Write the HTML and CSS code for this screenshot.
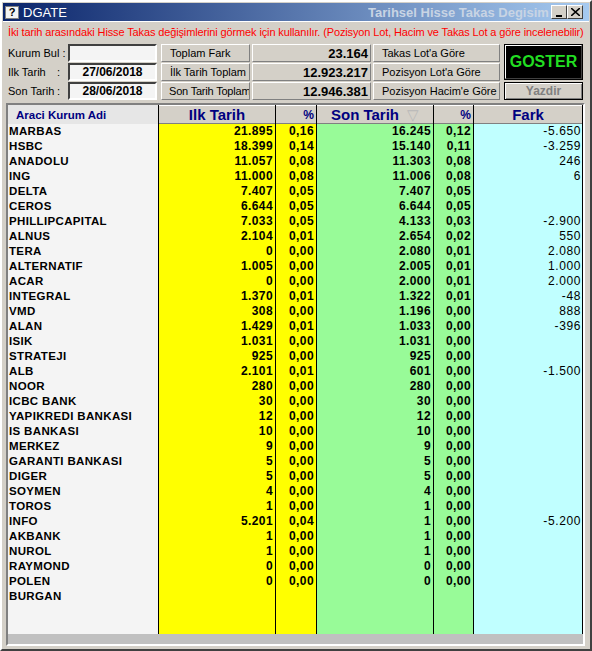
FILE: index.html
```html
<!DOCTYPE html>
<html>
<head>
<meta charset="utf-8">
<link rel="stylesheet" href="styles.css">
</head>
<body>
<div class="window">
  <div class="titlebar">
    <span class="app-icon">?</span>
    <span class="title">DGATE</span>
    <span class="subtitle">Tarihsel Hisse Takas Degisim</span>
    <span class="tb-btn tb-min"><span class="min-bar"></span></span>
    <span class="tb-btn tb-close">
      <svg width="9" height="8" viewBox="0 0 9 8"><path d="M0 0L9 8M9 0L0 8" stroke="#000" stroke-width="1.6"/></svg>
    </span>
  </div>
  <div class="body">
    <div class="hint">İki tarih arasındaki Hisse Takas değişimlerini görmek için kullanılır. (Pozisyon Lot, Hacim ve Takas Lot a göre incelenebilir)</div>
    <div class="form">
      <div class="lbl">Kurum Bul :</div>
      <div class="field"></div>
      <div class="btn">Toplam Fark</div>
      <div class="value">23.164</div>
      <div class="btn">Takas Lot'a Göre</div>
      <div class="goster">GOSTER</div>

      <div class="lbl"><span>Ilk Tarih</span><span>:</span></div>
      <div class="field date">27/06/2018</div>
      <div class="btn">İlk Tarih Toplam</div>
      <div class="value">12.923.217</div>
      <div class="btn">Pozisyon Lot'a Göre</div>

      <div class="lbl"><span>Son Tarih</span><span>:</span></div>
      <div class="field date">28/06/2018</div>
      <div class="btn tight">Son Tarih Toplam</div>
      <div class="value">12.946.381</div>
      <div class="btn">Pozisyon Hacim'e Göre</div>
      <div class="yazdir">Yazdir</div>
    </div>
    <div class="grid">
      <div class="cols">
        <div class="col c-name">
          <div class="hd hd-name">Araci Kurum Adi</div>
          <div class="cell">MARBAS</div><div class="cell">HSBC</div><div class="cell">ANADOLU</div><div class="cell">ING</div><div class="cell">DELTA</div><div class="cell">CEROS</div><div class="cell">PHILLIPCAPITAL</div><div class="cell">ALNUS</div><div class="cell">TERA</div><div class="cell">ALTERNATIF</div><div class="cell">ACAR</div><div class="cell">INTEGRAL</div><div class="cell">VMD</div><div class="cell">ALAN</div><div class="cell">ISIK</div><div class="cell">STRATEJI</div><div class="cell">ALB</div><div class="cell">NOOR</div><div class="cell">ICBC BANK</div><div class="cell">YAPIKREDI BANKASI</div><div class="cell">IS BANKASI</div><div class="cell">MERKEZ</div><div class="cell">GARANTI BANKASI</div><div class="cell">DIGER</div><div class="cell">SOYMEN</div><div class="cell">TOROS</div><div class="cell">INFO</div><div class="cell">AKBANK</div><div class="cell">NUROL</div><div class="cell">RAYMOND</div><div class="cell">POLEN</div><div class="cell">BURGAN</div>
        </div>
        <div class="col c-ilk">
          <div class="hd hd-big">Ilk Tarih</div>
          <div class="cell num">21.895</div><div class="cell num">18.399</div><div class="cell num">11.057</div><div class="cell num">11.000</div><div class="cell num">7.407</div><div class="cell num">6.644</div><div class="cell num">7.033</div><div class="cell num">2.104</div><div class="cell num">0</div><div class="cell num">1.005</div><div class="cell num">0</div><div class="cell num">1.370</div><div class="cell num">308</div><div class="cell num">1.429</div><div class="cell num">1.031</div><div class="cell num">925</div><div class="cell num">2.101</div><div class="cell num">280</div><div class="cell num">30</div><div class="cell num">12</div><div class="cell num">10</div><div class="cell num">9</div><div class="cell num">5</div><div class="cell num">5</div><div class="cell num">4</div><div class="cell num">1</div><div class="cell num">5.201</div><div class="cell num">1</div><div class="cell num">1</div><div class="cell num">0</div><div class="cell num">0</div>
        </div>
        <div class="col c-p1">
          <div class="hd hd-pct">%</div>
          <div class="cell num">0,16</div><div class="cell num">0,14</div><div class="cell num">0,08</div><div class="cell num">0,08</div><div class="cell num">0,05</div><div class="cell num">0,05</div><div class="cell num">0,05</div><div class="cell num">0,01</div><div class="cell num">0,00</div><div class="cell num">0,00</div><div class="cell num">0,00</div><div class="cell num">0,01</div><div class="cell num">0,00</div><div class="cell num">0,01</div><div class="cell num">0,00</div><div class="cell num">0,00</div><div class="cell num">0,01</div><div class="cell num">0,00</div><div class="cell num">0,00</div><div class="cell num">0,00</div><div class="cell num">0,00</div><div class="cell num">0,00</div><div class="cell num">0,00</div><div class="cell num">0,00</div><div class="cell num">0,00</div><div class="cell num">0,00</div><div class="cell num">0,04</div><div class="cell num">0,00</div><div class="cell num">0,00</div><div class="cell num">0,00</div><div class="cell num">0,00</div>
        </div>
        <div class="col c-son">
          <div class="hd hd-big">Son Tarih <span class="sort">▽</span></div>
          <div class="cell num">16.245</div><div class="cell num">15.140</div><div class="cell num">11.303</div><div class="cell num">11.006</div><div class="cell num">7.407</div><div class="cell num">6.644</div><div class="cell num">4.133</div><div class="cell num">2.654</div><div class="cell num">2.080</div><div class="cell num">2.005</div><div class="cell num">2.000</div><div class="cell num">1.322</div><div class="cell num">1.196</div><div class="cell num">1.033</div><div class="cell num">1.031</div><div class="cell num">925</div><div class="cell num">601</div><div class="cell num">280</div><div class="cell num">30</div><div class="cell num">12</div><div class="cell num">10</div><div class="cell num">9</div><div class="cell num">5</div><div class="cell num">5</div><div class="cell num">4</div><div class="cell num">1</div><div class="cell num">1</div><div class="cell num">1</div><div class="cell num">1</div><div class="cell num">0</div><div class="cell num">0</div>
        </div>
        <div class="col c-p2">
          <div class="hd hd-pct">%</div>
          <div class="cell num">0,12</div><div class="cell num">0,11</div><div class="cell num">0,08</div><div class="cell num">0,08</div><div class="cell num">0,05</div><div class="cell num">0,05</div><div class="cell num">0,03</div><div class="cell num">0,02</div><div class="cell num">0,01</div><div class="cell num">0,01</div><div class="cell num">0,01</div><div class="cell num">0,01</div><div class="cell num">0,00</div><div class="cell num">0,00</div><div class="cell num">0,00</div><div class="cell num">0,00</div><div class="cell num">0,00</div><div class="cell num">0,00</div><div class="cell num">0,00</div><div class="cell num">0,00</div><div class="cell num">0,00</div><div class="cell num">0,00</div><div class="cell num">0,00</div><div class="cell num">0,00</div><div class="cell num">0,00</div><div class="cell num">0,00</div><div class="cell num">0,00</div><div class="cell num">0,00</div><div class="cell num">0,00</div><div class="cell num">0,00</div><div class="cell num">0,00</div>
        </div>
        <div class="col c-fark">
          <div class="hd hd-big">Fark</div>
          <div class="cell num fk">-5.650</div><div class="cell num fk">-3.259</div><div class="cell num fk">246</div><div class="cell num fk">6</div><div class="cell num fk"></div><div class="cell num fk"></div><div class="cell num fk">-2.900</div><div class="cell num fk">550</div><div class="cell num fk">2.080</div><div class="cell num fk">1.000</div><div class="cell num fk">2.000</div><div class="cell num fk">-48</div><div class="cell num fk">888</div><div class="cell num fk">-396</div><div class="cell num fk"></div><div class="cell num fk"></div><div class="cell num fk">-1.500</div><div class="cell num fk"></div><div class="cell num fk"></div><div class="cell num fk"></div><div class="cell num fk"></div><div class="cell num fk"></div><div class="cell num fk"></div><div class="cell num fk"></div><div class="cell num fk"></div><div class="cell num fk"></div><div class="cell num fk">-5.200</div>
        </div>
      </div>
      <div class="hscroll"></div>
    </div>
  </div>
</div>
</body>
</html>
```

FILE: styles.css
```css
* { box-sizing: border-box; }
html, body { margin: 0; padding: 0; }
body {
  font-family: "Liberation Sans", Arial, sans-serif;
  background: #d4d0c8;
  width: 592px;
  height: 651px;
  overflow: hidden;
}
.window {
  width: 592px;
  height: 651px;
  background: #d4d0c8;
  border-style: solid;
  border-width: 2px;
  border-color: #ffffff #404040 #404040 #ffffff;
  padding: 1px;
  display: flex;
  flex-direction: column;
}
.titlebar {
  height: 18px;
  flex: none;
  background: linear-gradient(to right, #0a246a, #a6caf0);
  display: flex;
  align-items: center;
  padding: 0 2px 0 2px;
  overflow: hidden;
}
.app-icon {
  width: 14px;
  height: 13px;
  background: #f4f4f4;
  border: 1px solid #808080;
  color: #000;
  font-weight: bold;
  font-size: 11px;
  line-height: 11px;
  text-align: center;
  flex: none;
}
.title {
  color: #fff;
  font-size: 13px;
  margin-left: 4px;
  flex: 1;
}
.subtitle {
  color: #c8d4e4;
  font-weight: bold;
  font-size: 13px;
  white-space: nowrap;
  overflow: hidden;
  width: 183px;
  flex: none;
}
.tb-btn {
  width: 16px;
  height: 14px;
  background: #d4d0c8;
  border-style: solid;
  border-width: 1px;
  border-color: #fff #404040 #404040 #fff;
  display: flex;
  align-items: center;
  justify-content: center;
  flex: none;
}
.tb-close { margin-right: 4px; }
.min-bar {
  width: 6px;
  height: 2px;
  background: #000;
  margin-top: 7px;
}
.body {
  flex: 1;
  display: flex;
  flex-direction: column;
  padding: 0 2px 2px 3px;
  border-top: 1px solid #ffffff;
}
.hint {
  color: #ff0000;
  font-size: 11px;
  height: 20px;
  line-height: 20px;
  padding-left: 2px;
  white-space: nowrap;
  letter-spacing: -0.13px;
}
.form {
  display: grid;
  grid-template-columns: 58px 91px 89px 119px 127px 81px;
  grid-template-rows: 18px 18px 18px;
  column-gap: 2px;
  row-gap: 1px;
  margin-top: 2px;
  padding-left: 2px;
}
.lbl {
  font-size: 11px;
  color: #000;
  display: flex;
  align-items: center;
  white-space: nowrap;
}
.lbl span:first-child { width: 49px; }
.field {
  width: 89px;
  background: #f4f4f4;
  border-style: solid;
  border-width: 2px;
  border-color: #404040 #ffffff #ffffff #404040;
  font-size: 12px;
  font-weight: bold;
  display: flex;
  align-items: center;
  justify-content: center;
}
.btn {
  background: #d4d0c8;
  border-style: solid;
  border-width: 1px;
  border-color: #ffffff #808080 #808080 #ffffff;
  font-size: 11px;
  display: flex;
  align-items: center;
  padding-left: 8px;
  white-space: nowrap;
  overflow: hidden;
}
.btn.tight { letter-spacing: -0.2px; padding-left: 7px; }
.value {
  background: #d4d0c8;
  border-style: solid;
  border-width: 1px;
  border-color: #ffffff #808080 #808080 #ffffff;
  font-size: 13px;
  font-weight: bold;
  display: flex;
  align-items: center;
  justify-content: flex-end;
  padding-right: 2px;
}
.goster {
  grid-row: 1 / span 2;
  grid-column: 6;
  background: #000;
  color: #22dd22;
  font-weight: bold;
  font-size: 16px;
  border-style: solid;
  border-width: 2px;
  border-color: #ffffff #404040 #404040 #ffffff;
  outline: 1px solid #000;
  outline-offset: -1px;
  display: flex;
  align-items: center;
  justify-content: center;
  margin-left: 2px;
  margin-bottom: 1px;
}
.yazdir {
  grid-row: 3;
  grid-column: 6;
  background: #d4d0c8;
  color: #808080;
  font-weight: bold;
  font-size: 12px;
  border: 1px solid #000;
  box-shadow: inset 1px 1px 0 #fff, inset -1px -1px 0 #808080;
  display: flex;
  align-items: center;
  justify-content: center;
  margin-left: 2px;
}
.grid {
  flex: 1;
  margin-top: 3px;
  width: 579px;
  border-style: solid;
  border-width: 2px;
  border-color: #808080 #ffffff #ffffff #808080;
  display: flex;
  flex-direction: column;
  overflow: hidden;
}
.cols {
  flex: 1;
  display: flex;
  overflow: hidden;
}
.col {
  display: flex;
  flex-direction: column;
  border-right: 1px solid #000;
  flex: none;
}
.c-name { width: 151px; background: #f4f4f4; }
.c-ilk { width: 117px; background: #ffff00; }
.c-p1 { width: 41px; background: #ffff00; }
.c-son { width: 117px; background: #98fb98; }
.c-p2 { width: 40px; background: #98fb98; }
.c-fark { width: 109px; background: #c0ffff; }
.hd {
  height: 19px;
  flex: none;
  background: #d4d0c8;
  border-top: 1px solid #ffffff;
  border-bottom: 1px solid #808080;
  color: #000080;
  font-weight: bold;
  display: flex;
  align-items: center;
  justify-content: center;
  white-space: nowrap;
}
.hd-name {
  background: #e6e6e6;
  border-top: none;
  border-bottom: none;
  justify-content: flex-start;
  padding-left: 8px;
  font-size: 11.5px;
}
.hd-big { font-size: 15px; }
.hd-pct { font-size: 12px; justify-content: flex-end; padding-right: 2px; }
.sort {
  color: #b8b8b8;
  font-weight: normal;
  font-size: 15px;
  margin-left: 8px;
}
.cell {
  height: 15px;
  line-height: 15px;
  font-size: 11.5px;
  font-weight: bold;
  color: #000;
  white-space: nowrap;
  letter-spacing: 0.35px;
  flex: none;
}
.c-name .cell { padding-left: 1px; }
.num {
  font-size: 12px;
  letter-spacing: 0.4px;
  text-align: right;
  padding-right: 2px;
}
.c-fark .fk { font-weight: normal; letter-spacing: 0.6px; padding-right: 1px; }
.hscroll {
  height: 10px;
  flex: none;
  background: #c0c0c0;
}
```
